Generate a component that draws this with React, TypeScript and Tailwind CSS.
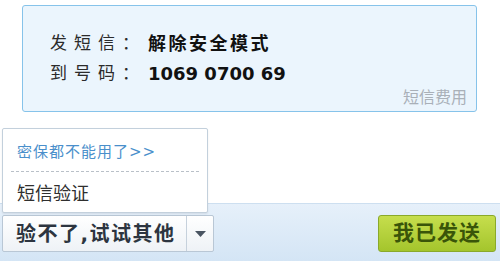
import React from "react";

export default function App() {
  const cjk = '"DejaVu Sans", "Noto Sans CJK SC", sans-serif';
  return (
    <div
      className="relative w-[500px] h-[261px] bg-white flex flex-col overflow-hidden"
      style={{ fontFamily: cjk }}
    >
      <div className="h-[203px] pt-[5px] pl-[22px]">
        <div className="w-[455px] h-[107px] rounded-[3px] border border-[#86c3ea] bg-[#ebf5fd] pl-[27px] pt-[23px] pr-[9px] flex flex-col">
          <div className="flex items-center h-[32px] text-[17px] text-[#2b2b2b]">
            <span className="tracking-[7px] w-[98px]">发短信：</span>
            <span className="font-bold text-[18px] tracking-[2.5px] text-[#111]">解除安全模式</span>
          </div>
          <div className="flex items-center h-[33px] text-[17px] text-[#2b2b2b]">
            <span className="tracking-[7px] w-[98px]">到号码：</span>
            <span className="font-bold text-[18px] text-[#111]">1069 0700 69</span>
          </div>
          <div className="mt-auto mb-[4px] text-right text-[16px] leading-[18px] text-[#a9b0b8]">
            短信费用
          </div>
        </div>
      </div>
      <div className="h-[58px] border-t border-[#cddff0] bg-gradient-to-b from-[#e6f0fa] to-[#d4e5f5] flex items-start justify-between pt-[11px] pl-[2px] pr-[4px]">
        <div className="flex h-[37px] rounded-[2px] border border-[#b9c7d5] bg-gradient-to-b from-white to-[#eef2f6]">
          <div className="w-[183px] flex items-center pl-[13px] text-[20px] font-bold text-[#2d3540] tracking-[1.5px]">
            验不了,试试其他
          </div>
          <div className="w-[27px] border-l border-[#c6d1dc] flex items-center justify-center">
            <svg width="11" height="6" viewBox="0 0 11 6">
              <path d="M0 0 L11 0 L5.5 6 Z" fill="#4a5562" />
            </svg>
          </div>
        </div>
        <div className="w-[118px] h-[37px] rounded-[3px] border border-[#8aa92a] bg-gradient-to-b from-[#c6de4c] to-[#a4c52c] flex items-center justify-center text-[21px] font-bold text-[#3a5509] tracking-[1px]">
          我已发送
        </div>
      </div>
      <div className="absolute left-[2px] top-[128px] w-[206px] h-[85px] bg-white border border-[#c3d0dc] rounded-[2px] shadow-[0_1px_2px_rgba(0,0,0,0.08)] px-[8px]">
        <div className="h-[42px] flex items-center pl-[6px] pt-[5px] text-[15px] text-[#4a8fcb] tracking-[1px]">
          密保都不能用了&gt;&gt;
        </div>
        <div className="border-t border-dashed border-[#b9c0c8]" />
        <div className="h-[42px] flex items-center pl-[6px] text-[18px] text-[#2f2f2f]">
          短信验证
        </div>
      </div>
    </div>
  );
}
